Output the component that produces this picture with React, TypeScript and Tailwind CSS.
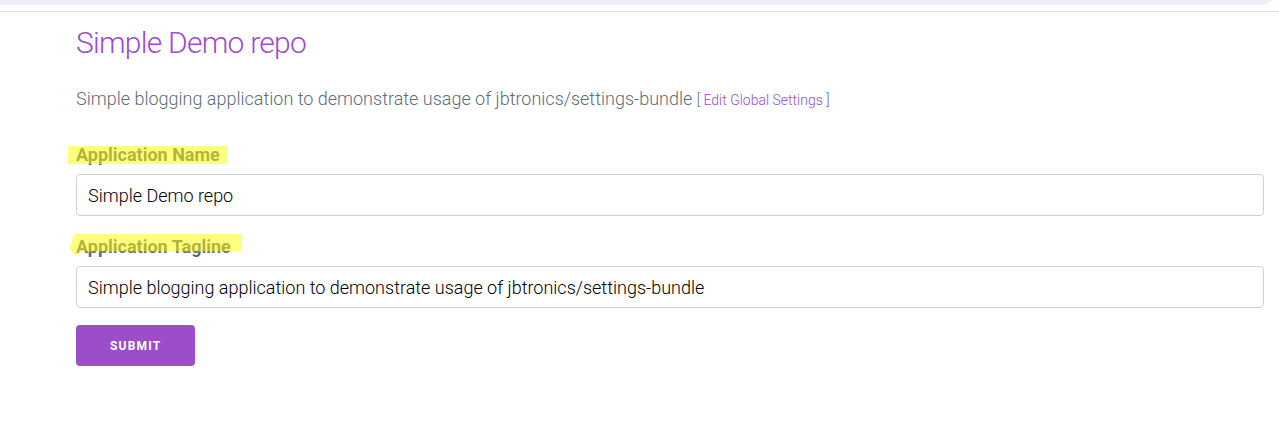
import { useState } from "react";
import type { ReactNode } from "react";

type FieldProps = {
  id: string;
  label: string;
  initial: string;
  highlight: ReactNode;
};

function Field({ id, label, initial, highlight }: FieldProps) {
  const [value, setValue] = useState(initial);
  return (
    <div className="mb-[17px]">
      <div className="relative mb-[5px] flex">
        <label htmlFor={id} className="text-lg leading-7 font-bold">
          {label}
        </label>
        {highlight}
      </div>
      <input
        id={id}
        type="text"
        value={value}
        onChange={(event) => setValue(event.target.value)}
        className="block h-[42px] w-full rounded border border-[#d1d1d1] bg-transparent px-[11px] text-lg font-light text-black outline-none focus:border-[#9b4dca]"
      />
    </div>
  );
}

export default function App() {
  return (
    <div className="bg-white font-['Roboto',sans-serif] font-light text-[#606c76]">
      <div className="border-b border-[#e0e0e2] pr-0.5 pb-1.5">
        <div className="flex h-[5px] items-end overflow-hidden">
          <div className="h-[34px] w-full shrink-0 rounded-r-full bg-[#ebeef8]" />
        </div>
      </div>
      <main className="pt-[13px] pr-[15px] pl-[76px]">
        <h1 className="mb-6 text-3xl leading-9 font-light tracking-tight text-[#9b4dca]">
          Simple Demo repo
        </h1>
        <p className="mb-7 text-lg leading-7">
          Simple blogging application to demonstrate usage of jbtronics/settings-bundle{" "}
          <small className="text-sm">
            [{" "}
            <a href="#settings" className="text-[#9b4dca] hover:text-[#606c76]">
              Edit Global Settings
            </a>{" "}
            ]
          </small>
        </p>
        <form onSubmit={(event) => event.preventDefault()}>
          <Field
            id="app-name"
            label="Application Name"
            initial="Simple Demo repo"
            highlight={
              <svg
                aria-hidden="true"
                className="pointer-events-none absolute -left-2 top-1 h-6 w-44"
                viewBox="0 0 176 24"
              >
                <path d="M-0.5 1H159.5V19H-0.5Z" fill="#ffff00" fillOpacity="0.5" />
              </svg>
            }
          />
          <Field
            id="app-tagline"
            label="Application Tagline"
            initial="Simple blogging application to demonstrate usage of jbtronics/settings-bundle"
            highlight={
              <svg
                aria-hidden="true"
                className="pointer-events-none absolute -left-2 top-0 h-6 w-44"
                viewBox="0 0 176 24"
              >
                <path d="M7 1H174V18.5H13L8 22L6 21L1 15Z" fill="#ffff00" fillOpacity="0.5" />
              </svg>
            }
          />
          <button
            type="submit"
            className="h-[41px] cursor-pointer rounded bg-[#9b4dca] px-[34px] text-xs font-bold tracking-widest text-white uppercase hover:bg-[#606c76]"
          >
            Submit
          </button>
        </form>
      </main>
    </div>
  );
}
